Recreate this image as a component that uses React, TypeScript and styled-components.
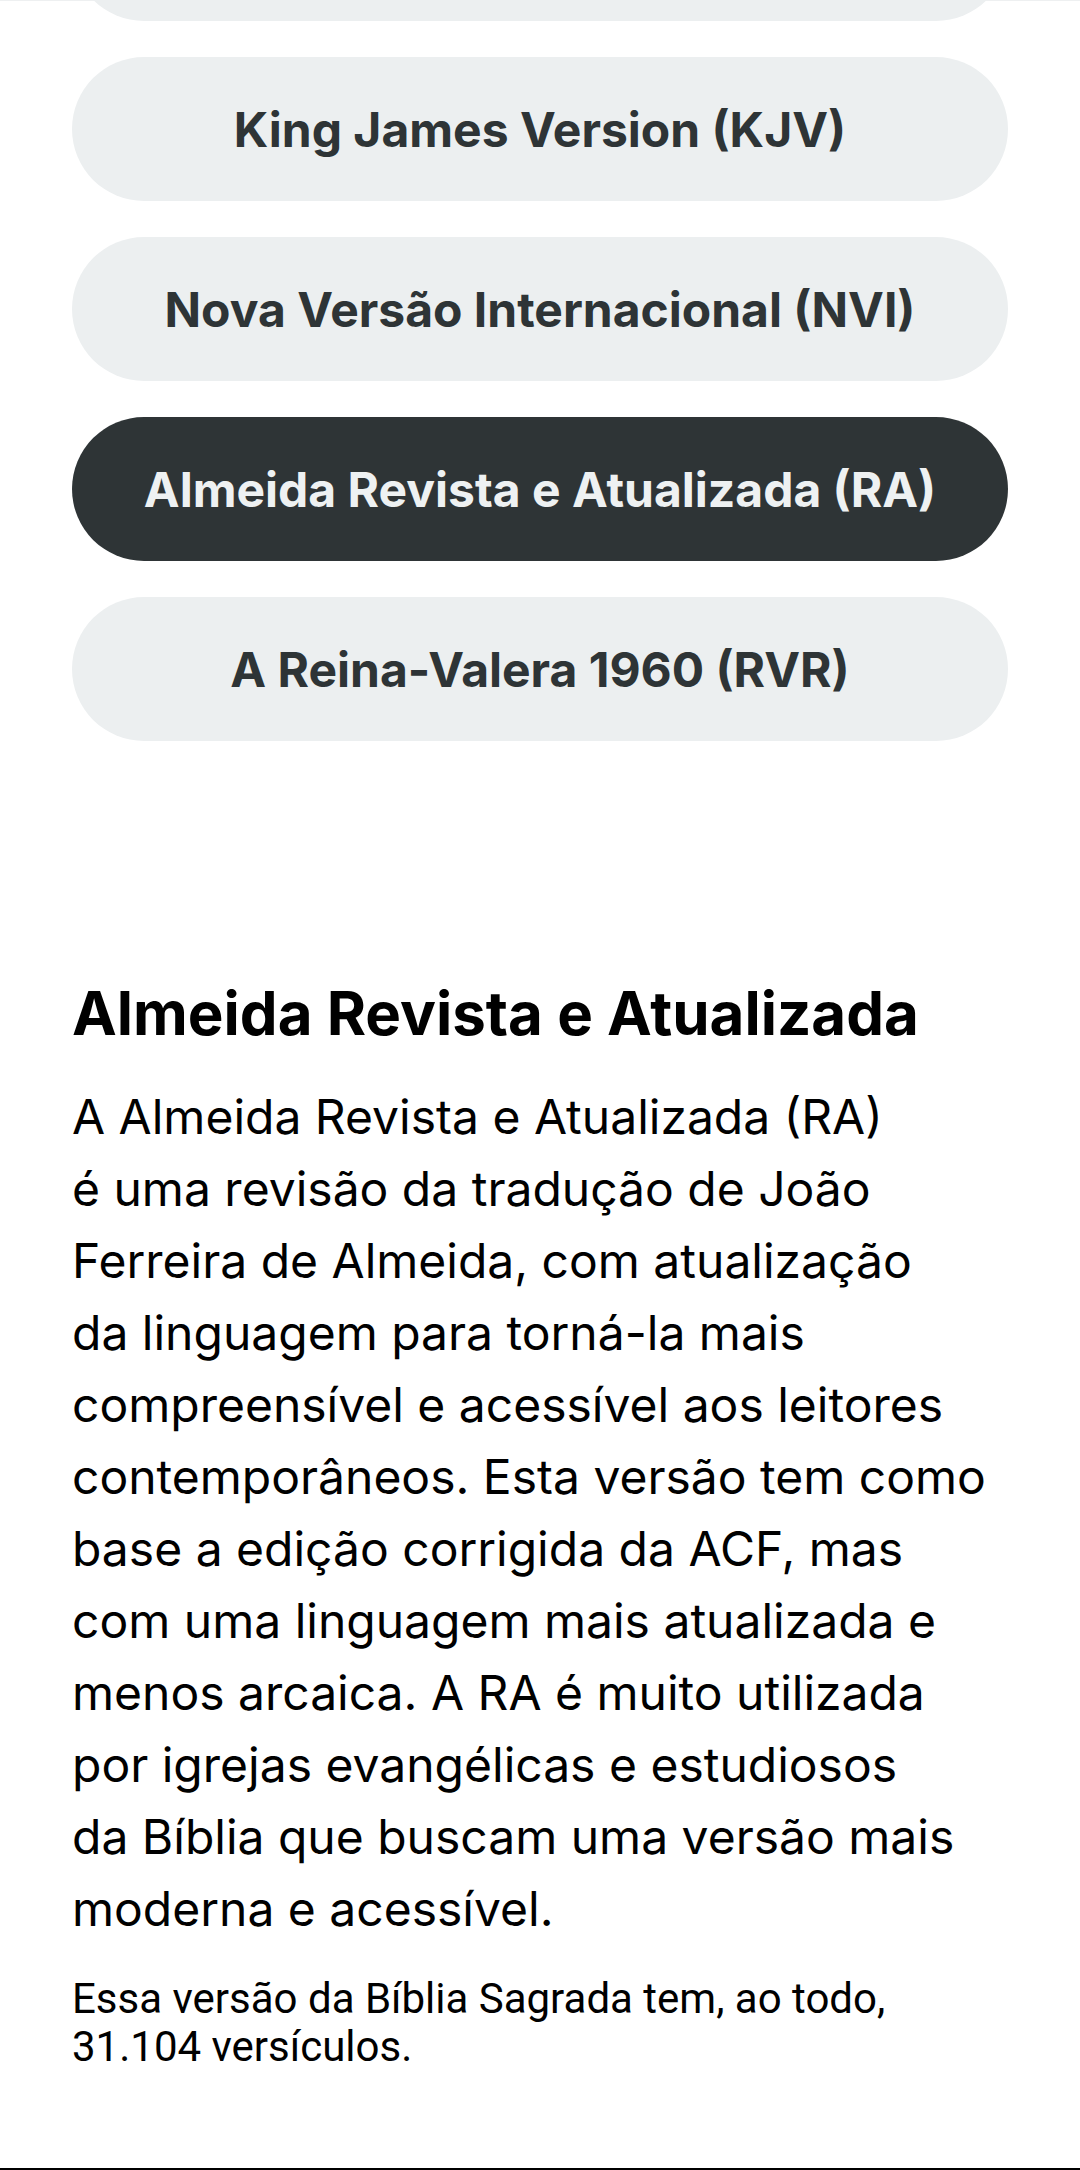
import React from "react";
import styled, { createGlobalStyle } from "styled-components";

const GlobalStyle = createGlobalStyle`
  html, body {
    margin: 0;
    padding: 0;
    background: #ffffff;
  }
  body {
    font-family: Inter, "Noto Sans", sans-serif;
    overflow: hidden;
  }
`;

const Page = styled.div`
  width: 1080px;
  height: 2170px;
  display: flex;
  flex-direction: column;
  overflow: hidden;
  background: #ffffff;
  box-sizing: border-box;
  border-bottom: 2px solid #000000;
`;

const TopEdge = styled.div`
  height: 1px;
  flex-shrink: 0;
  background: #eef0f1;
`;

const VersionList = styled.div`
  display: flex;
  flex-direction: column;
  gap: 36px;
  padding: 0 72px;
  margin-top: -124px;
  flex-shrink: 0;
`;

const VersionButton = styled.button<{ $active?: boolean }>`
  height: 144px;
  border: none;
  border-radius: 72px;
  background: ${(p) => (p.$active ? "#2e3436" : "#eceff0")};
  color: ${(p) => (p.$active ? "#eef1f2" : "#2e3436")};
  font-family: Inter, "Noto Sans", sans-serif;
  font-weight: 700;
  font-size: 48px;
  display: flex;
  align-items: center;
  justify-content: center;
  padding: 0 24px;
  cursor: pointer;
`;

const Info = styled.section`
  display: flex;
  flex-direction: column;
  padding: 236px 72px 0;
`;

const Title = styled.h2`
  margin: 0;
  font-family: Inter, "Noto Sans", sans-serif;
  font-weight: 700;
  font-size: 60px;
  line-height: 72px;
  color: #000000;
`;

const Description = styled.p`
  margin: 32px 0 0;
  font-family: Inter, "Noto Sans", sans-serif;
  font-weight: 400;
  font-size: 48px;
  line-height: 72px;
  color: #000000;
  white-space: nowrap;
`;

const Line = styled.span`
  display: block;
`;

const Note = styled.p`
  margin: 30px 0 0;
  font-family: Roboto, "Liberation Sans", sans-serif;
  font-weight: 400;
  font-size: 42px;
  line-height: 48px;
  color: #000000;
`;

const versions = [
  { id: "acf", label: "Almeida Corrigida Fiel (ACF)" },
  { id: "kjv", label: "King James Version (KJV)" },
  { id: "nvi", label: "Nova Versão Internacional (NVI)" },
  { id: "ra", label: "Almeida Revista e Atualizada (RA)" },
  { id: "rvr", label: "A Reina-Valera 1960 (RVR)" },
];

const descriptionLines = [
  "A Almeida Revista e Atualizada (RA)",
  "é uma revisão da tradução de João",
  "Ferreira de Almeida, com atualização",
  "da linguagem para torná-la mais",
  "compreensível e acessível aos leitores",
  "contemporâneos. Esta versão tem como",
  "base a edição corrigida da ACF, mas",
  "com uma linguagem mais atualizada e",
  "menos arcaica. A RA é muito utilizada",
  "por igrejas evangélicas e estudiosos",
  "da Bíblia que buscam uma versão mais",
  "moderna e acessível.",
];

export default function App() {
  const selected = "ra";
  return (
    <>
      <GlobalStyle />
      <Page>
        <TopEdge />
        <VersionList>
          {versions.map((v) => (
            <VersionButton key={v.id} $active={v.id === selected}>
              {v.label}
            </VersionButton>
          ))}
        </VersionList>
        <Info>
          <Title>Almeida Revista e Atualizada</Title>
          <Description>
            {descriptionLines.map((l, i) => (
              <Line key={i}>{l}</Line>
            ))}
          </Description>
          <Note>
            <Line>Essa versão da Bíblia Sagrada tem, ao todo,</Line>
            <Line>31.104 versículos.</Line>
          </Note>
        </Info>
      </Page>
    </>
  );
}
